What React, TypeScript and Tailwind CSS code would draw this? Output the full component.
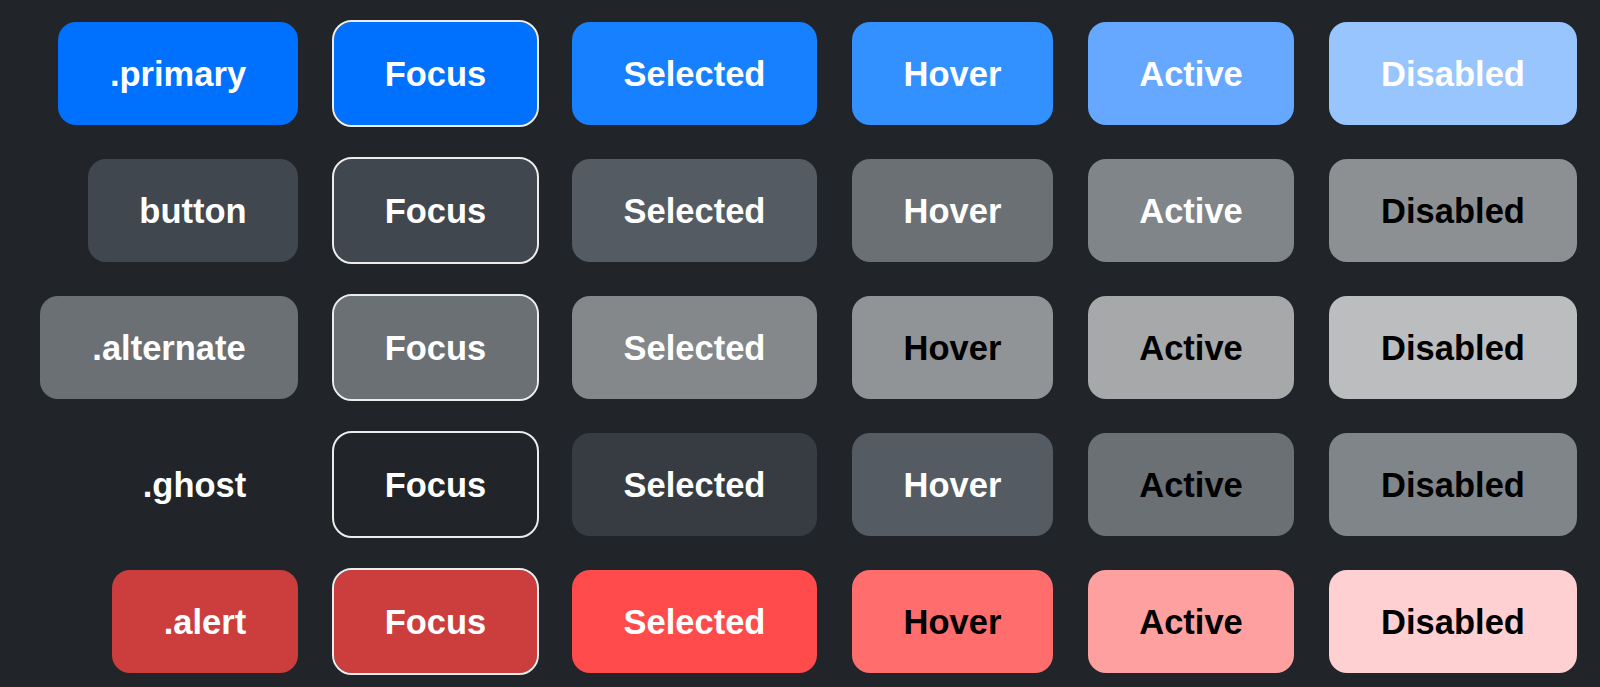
type Cell = { bg: string; text: string };

type Row = {
  label: string;
  labelBg: string;
  labelW: string;
  cells: Cell[];
};

const rows: Row[] = [
  {
    label: ".primary",
    labelBg: "bg-[#0070fe]",
    labelW: "w-[240px]",
    cells: [
      { bg: "bg-[#0070fe]", text: "text-white" },
      { bg: "bg-[#1780ff]", text: "text-white" },
      { bg: "bg-[#3390ff]", text: "text-white" },
      { bg: "bg-[#66a8ff]", text: "text-white" },
      { bg: "bg-[#99c5ff]", text: "text-white" },
    ],
  },
  {
    label: "button",
    labelBg: "bg-[#41474e]",
    labelW: "w-[210px]",
    cells: [
      { bg: "bg-[#41474e]", text: "text-white" },
      { bg: "bg-[#545b62]", text: "text-white" },
      { bg: "bg-[#6b7074]", text: "text-white" },
      { bg: "bg-[#808589]", text: "text-white" },
      { bg: "bg-[#8c9093]", text: "text-black" },
    ],
  },
  {
    label: ".alternate",
    labelBg: "bg-[#6b7074]",
    labelW: "w-[258px]",
    cells: [
      { bg: "bg-[#6b7074]", text: "text-white" },
      { bg: "bg-[#84888b]", text: "text-white" },
      { bg: "bg-[#919497]", text: "text-black" },
      { bg: "bg-[#a6a8aa]", text: "text-black" },
      { bg: "bg-[#bcbdbe]", text: "text-black" },
    ],
  },
  {
    label: ".ghost",
    labelBg: "bg-transparent",
    labelW: "w-[207px]",
    cells: [
      { bg: "bg-[#212529]", text: "text-white" },
      { bg: "bg-[#363c42]", text: "text-white" },
      { bg: "bg-[#545b62]", text: "text-white" },
      { bg: "bg-[#6b7074]", text: "text-black" },
      { bg: "bg-[#808589]", text: "text-black" },
    ],
  },
  {
    label: ".alert",
    labelBg: "bg-[#cc3e3e]",
    labelW: "w-[186px]",
    cells: [
      { bg: "bg-[#cc3e3e]", text: "text-white" },
      { bg: "bg-[#ff4b4b]", text: "text-white" },
      { bg: "bg-[#ff6d6d]", text: "text-black" },
      { bg: "bg-[#ffa0a0]", text: "text-black" },
      { bg: "bg-[#ffd0d2]", text: "text-black" },
    ],
  },
];

const columns = [
  { label: "Focus", w: "w-[203px]" },
  { label: "Selected", w: "w-[245px]" },
  { label: "Hover", w: "w-[201px]" },
  { label: "Active", w: "w-[206px]" },
  { label: "Disabled", w: "w-[248px]" },
];

function App() {
  return (
    <div
      className="min-h-screen w-full bg-[#212529] pt-[22px] flex flex-col gap-[34px]"
      style={{ fontFamily: '"Liberation Sans", Arial, sans-serif' }}
    >
      {rows.map((row) => (
        <div key={row.label} className="flex items-center gap-[35px] h-[103px]">
          <div className="w-[298px] flex justify-end">
            <button
              className={`${row.labelW} ${row.labelBg} h-[103px] pt-[3px] rounded-[18px] text-white text-[34.5px] font-bold flex items-center justify-center`}
            >
              {row.label}
            </button>
          </div>
          {columns.map((col, i) => (
            <button
              key={col.label}
              className={`${col.w} ${row.cells[i].bg} ${row.cells[i].text} h-[103px] pt-[3px] rounded-[18px] text-[34.5px] font-bold flex items-center justify-center ${
                i === 0 ? "ml-px outline-2 outline-[#ececec]" : ""
              }`}
            >
              {col.label}
            </button>
          ))}
        </div>
      ))}
    </div>
  );
}

export default App;
